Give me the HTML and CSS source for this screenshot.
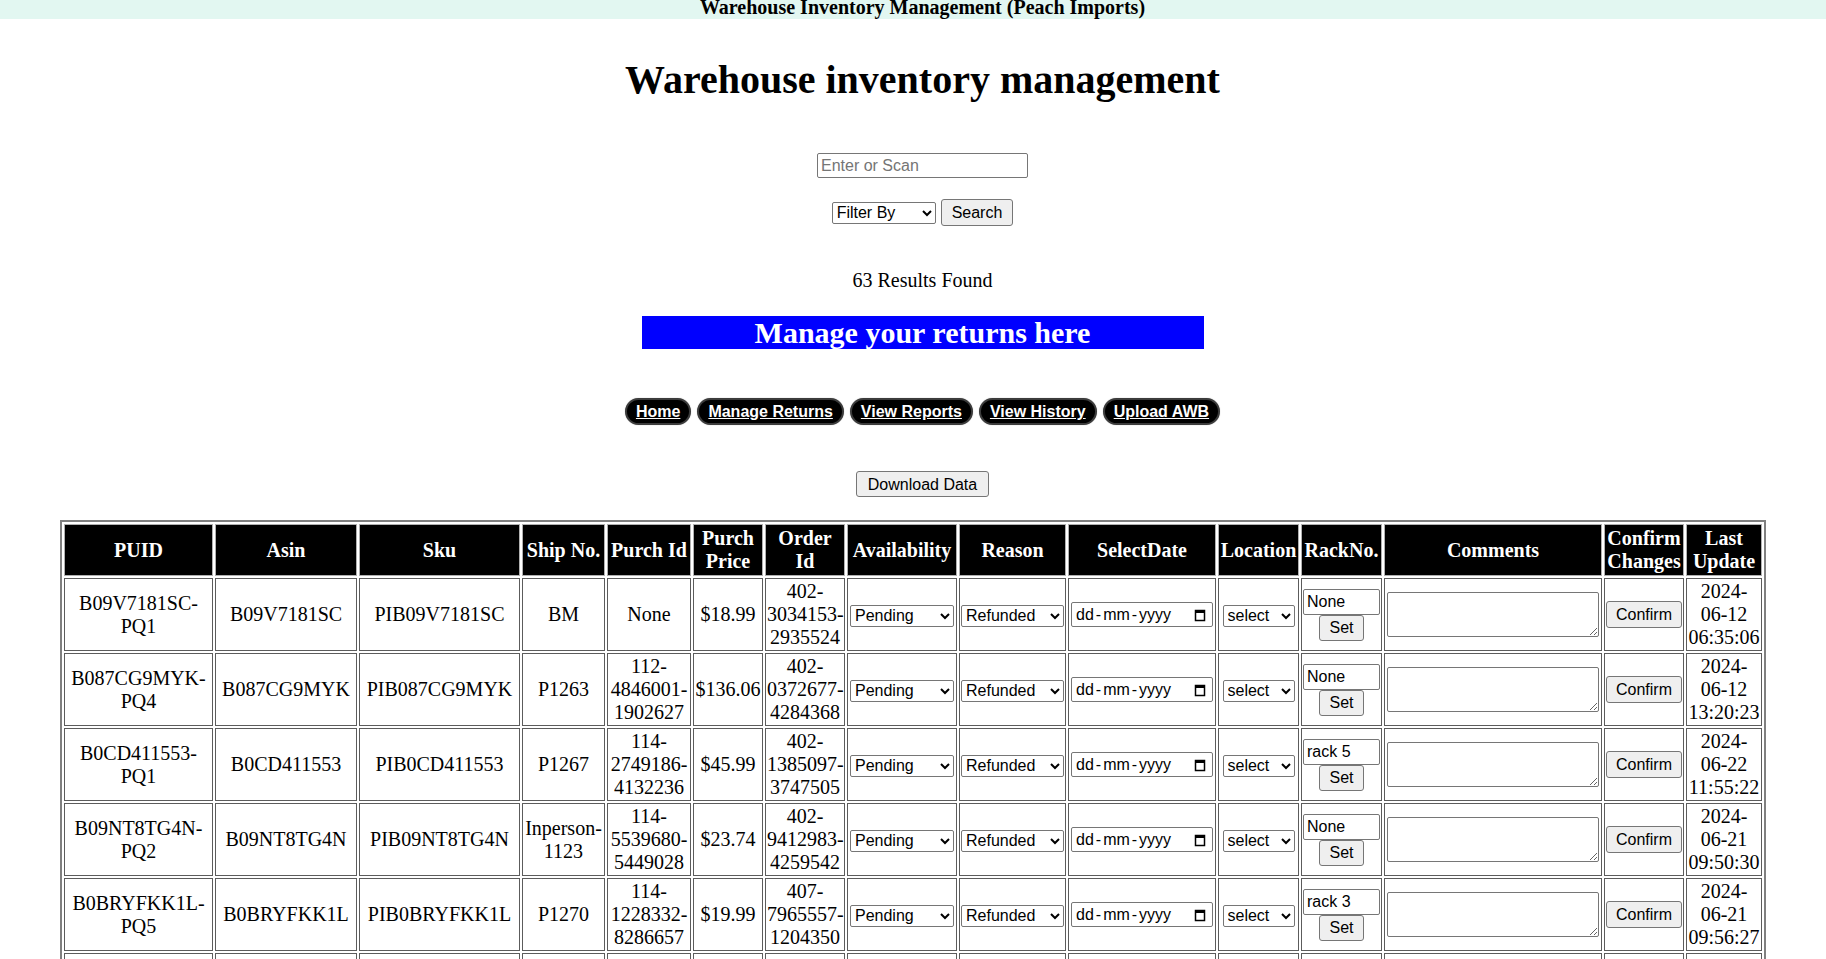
FILE: index.html
```html
<!DOCTYPE html>
<html lang="en">
<head>
<meta charset="utf-8">
<title>Warehouse Inventory Management</title>
<link rel="stylesheet" href="styles.css">
</head>
<body>
<div class="topbar">Warehouse Inventory Management (Peach Imports)</div>
<div class="head">
  <h1 class="title">Warehouse inventory management</h1>
  <input class="scan" type="text" placeholder="Enter or Scan">
  <div class="filter-row">
    <select class="filter"><option>Filter By</option></select>
    <button class="btn search">Search</button>
  </div>
  <p class="results">63 Results Found</p>
  <div class="banner">Manage your returns here</div>
  <nav class="nav">
    <a href="#">Home</a>
    <a href="#">Manage Returns</a>
    <a href="#">View Reports</a>
    <a href="#">View History</a>
    <a href="#">Upload AWB</a>
  </nav>
  <button class="btn download">Download Data</button>
</div>

<table class="inv">
  <thead>
    <tr>
      <th class="c-puid">PUID</th>
      <th class="c-asin">Asin</th>
      <th class="c-sku">Sku</th>
      <th class="c-ship">Ship No.</th>
      <th class="c-pid">Purch Id</th>
      <th class="c-price">Purch Price</th>
      <th class="c-order">Order Id</th>
      <th class="c-avail">Availability</th>
      <th class="c-reason">Reason</th>
      <th class="c-date">SelectDate</th>
      <th class="c-loc">Location</th>
      <th class="c-rack">RackNo.</th>
      <th class="c-comm">Comments</th>
      <th class="c-conf">Confirm Changes</th>
      <th class="c-last">Last Update</th>
    </tr>
  </thead>
  <tbody>
    <tr>
      <td>B09V7181SC-PQ1</td><td>B09V7181SC</td><td>PIB09V7181SC</td><td>BM</td><td>None</td><td>$18.99</td><td>402-3034153-2935524</td>
      <td><select class="sel avail"><option>Pending</option></select></td>
      <td><select class="sel reason"><option>Refunded</option></select></td>
      <td><span class="date"><span class="df">dd</span><span class="ds">-</span><span class="df">mm</span><span class="ds">-</span><span class="df">yyyy</span><svg class="cal" width="12" height="14" viewBox="0 0 12 14"><rect x="1.5" y="2.5" width="9" height="10" fill="none" stroke="#000" stroke-width="1.5"/><rect x="1" y="2" width="10" height="3" fill="#000"/></svg></span></td>
      <td><select class="sel loc"><option>select</option></select></td>
      <td><input class="rack" type="text" value="None"><button class="btn set">Set</button></td>
      <td><textarea class="comm"></textarea></td>
      <td><button class="btn confirm">Confirm</button></td>
      <td>2024-06-12 06:35:06</td>
    </tr>
    <tr>
      <td>B087CG9MYK-PQ4</td><td>B087CG9MYK</td><td>PIB087CG9MYK</td><td>P1263</td><td>112-4846001-1902627</td><td>$136.06</td><td>402-0372677-4284368</td>
      <td><select class="sel avail"><option>Pending</option></select></td>
      <td><select class="sel reason"><option>Refunded</option></select></td>
      <td><span class="date"><span class="df">dd</span><span class="ds">-</span><span class="df">mm</span><span class="ds">-</span><span class="df">yyyy</span><svg class="cal" width="12" height="14" viewBox="0 0 12 14"><rect x="1.5" y="2.5" width="9" height="10" fill="none" stroke="#000" stroke-width="1.5"/><rect x="1" y="2" width="10" height="3" fill="#000"/></svg></span></td>
      <td><select class="sel loc"><option>select</option></select></td>
      <td><input class="rack" type="text" value="None"><button class="btn set">Set</button></td>
      <td><textarea class="comm"></textarea></td>
      <td><button class="btn confirm">Confirm</button></td>
      <td>2024-06-12 13:20:23</td>
    </tr>
    <tr>
      <td>B0CD411553-PQ1</td><td>B0CD411553</td><td>PIB0CD411553</td><td>P1267</td><td>114-2749186-4132236</td><td>$45.99</td><td>402-1385097-3747505</td>
      <td><select class="sel avail"><option>Pending</option></select></td>
      <td><select class="sel reason"><option>Refunded</option></select></td>
      <td><span class="date"><span class="df">dd</span><span class="ds">-</span><span class="df">mm</span><span class="ds">-</span><span class="df">yyyy</span><svg class="cal" width="12" height="14" viewBox="0 0 12 14"><rect x="1.5" y="2.5" width="9" height="10" fill="none" stroke="#000" stroke-width="1.5"/><rect x="1" y="2" width="10" height="3" fill="#000"/></svg></span></td>
      <td><select class="sel loc"><option>select</option></select></td>
      <td><input class="rack" type="text" value="rack 5"><button class="btn set">Set</button></td>
      <td><textarea class="comm"></textarea></td>
      <td><button class="btn confirm">Confirm</button></td>
      <td>2024-06-22 11:55:22</td>
    </tr>
    <tr>
      <td>B09NT8TG4N-PQ2</td><td>B09NT8TG4N</td><td>PIB09NT8TG4N</td><td>Inperson-1123</td><td>114-5539680-5449028</td><td>$23.74</td><td>402-9412983-4259542</td>
      <td><select class="sel avail"><option>Pending</option></select></td>
      <td><select class="sel reason"><option>Refunded</option></select></td>
      <td><span class="date"><span class="df">dd</span><span class="ds">-</span><span class="df">mm</span><span class="ds">-</span><span class="df">yyyy</span><svg class="cal" width="12" height="14" viewBox="0 0 12 14"><rect x="1.5" y="2.5" width="9" height="10" fill="none" stroke="#000" stroke-width="1.5"/><rect x="1" y="2" width="10" height="3" fill="#000"/></svg></span></td>
      <td><select class="sel loc"><option>select</option></select></td>
      <td><input class="rack" type="text" value="None"><button class="btn set">Set</button></td>
      <td><textarea class="comm"></textarea></td>
      <td><button class="btn confirm">Confirm</button></td>
      <td>2024-06-21 09:50:30</td>
    </tr>
    <tr>
      <td>B0BRYFKK1L-PQ5</td><td>B0BRYFKK1L</td><td>PIB0BRYFKK1L</td><td>P1270</td><td>114-1228332-8286657</td><td>$19.99</td><td>407-7965557-1204350</td>
      <td><select class="sel avail"><option>Pending</option></select></td>
      <td><select class="sel reason"><option>Refunded</option></select></td>
      <td><span class="date"><span class="df">dd</span><span class="ds">-</span><span class="df">mm</span><span class="ds">-</span><span class="df">yyyy</span><svg class="cal" width="12" height="14" viewBox="0 0 12 14"><rect x="1.5" y="2.5" width="9" height="10" fill="none" stroke="#000" stroke-width="1.5"/><rect x="1" y="2" width="10" height="3" fill="#000"/></svg></span></td>
      <td><select class="sel loc"><option>select</option></select></td>
      <td><input class="rack" type="text" value="rack 3"><button class="btn set">Set</button></td>
      <td><textarea class="comm"></textarea></td>
      <td><button class="btn confirm">Confirm</button></td>
      <td>2024-06-21 09:56:27</td>
    </tr>
    <tr>
      <td>B0BRYFKK1L-PQ6</td><td>B0BRYFKK1L</td><td>PIB0BRYFKK1L</td><td>P1270</td><td>114-1228332-8286657</td><td>$19.99</td><td>407-7965557-1204350</td>
      <td><select class="sel avail"><option>Pending</option></select></td>
      <td><select class="sel reason"><option>Refunded</option></select></td>
      <td><span class="date"><span class="df">dd</span><span class="ds">-</span><span class="df">mm</span><span class="ds">-</span><span class="df">yyyy</span><svg class="cal" width="12" height="14" viewBox="0 0 12 14"><rect x="1.5" y="2.5" width="9" height="10" fill="none" stroke="#000" stroke-width="1.5"/><rect x="1" y="2" width="10" height="3" fill="#000"/></svg></span></td>
      <td><select class="sel loc"><option>select</option></select></td>
      <td><input class="rack" type="text" value="None"><button class="btn set">Set</button></td>
      <td><textarea class="comm"></textarea></td>
      <td><button class="btn confirm">Confirm</button></td>
      <td>2024-06-21 09:58:10</td>
    </tr>
  </tbody>
</table>
</body>
</html>
```

FILE: styles.css
```css
body {
  margin: 0;
  font-family: "Liberation Serif", "Times New Roman", serif;
  font-size: 20px;
  color: #000;
  background: #fff;
}

.topbar {
  background: #e2f7f1;
  height: 19px;
  line-height: 15px;
  font-weight: bold;
  font-size: 20px;
  text-align: center;
  padding-left: 19px;
}

.head {
  display: flex;
  flex-direction: column;
  align-items: center;
  padding-left: 19px;
}

.title {
  font-size: 40px;
  line-height: 46px;
  margin: 38px 0 0;
  font-weight: bold;
}

.scan {
  margin-top: 50px;
  width: 211px;
  height: 25px;
  box-sizing: border-box;
  font: 16px "Liberation Sans", Arial, sans-serif;
  padding: 1px 3px;
  border: 1px solid #767676;
  border-radius: 2px;
}
.scan::placeholder { color: #757575; }

.filter-row {
  margin-top: 21px;
  display: flex;
  align-items: center;
  gap: 5px;
  height: 27px;
}

.filter, .sel {
  height: 22px;
  box-sizing: border-box;
  font: 16px "Liberation Sans", Arial, sans-serif;
  color: #000;
  background: #fff;
  border: 1px solid #767676;
  border-radius: 2px;
  vertical-align: middle;
}
.filter { width: 104px; }

.btn {
  font: 16px "Liberation Sans", Arial, sans-serif;
  line-height: 19px;
  color: #000;
  background: #efefef;
  border: 1px solid #767676;
  border-radius: 3px;
  padding: 3px 10px;
  box-sizing: border-box;
}
.search { height: 27px; }

.results {
  margin: 43px 0 0;
  line-height: 23px;
}

.banner {
  margin-top: 24px;
  width: 562px;
  height: 33px;
  background: #0000ff;
  color: #fff;
  font-weight: bold;
  font-size: 30px;
  line-height: 33px;
  text-align: center;
}

.nav {
  margin-top: 49px;
  display: flex;
  gap: 6px;
}
.nav a {
  display: block;
  height: 27px;
  box-sizing: border-box;
  padding: 0 9px;
  background: #000;
  color: #fff;
  font: bold 16px "Liberation Sans", Arial, sans-serif;
  line-height: 23px;
  text-decoration: underline;
  border: 2px solid #3c3c3c;
  border-radius: 14px;
  box-shadow: 0 0 1px #999;
}

.download {
  margin-top: 46px;
  height: 26px;
  padding: 2px 11px;
}

.inv {
  width: 1706px;
  table-layout: fixed;
  border: 2px solid #808080;
  border-spacing: 2px;
  margin: 23px auto 0;
}
.inv th {
  background: #000;
  color: #fff;
  font-weight: bold;
  font-size: 20px;
  line-height: 23px;
  border: 1px solid #b0b0b0;
  padding: 2px 1px;
  box-sizing: border-box;
}
.inv td {
  border: 1px solid #5c5c5c;
  padding: 1px;
  text-align: center;
  vertical-align: middle;
  line-height: 23px;
}

.c-puid { width: 149px; }
.c-asin { width: 142px; }
.c-sku { width: 161px; }
.c-ship { width: 83px; }
.c-pid { width: 84px; }
.c-price { width: 70px; }
.c-order { width: 80px; }
.c-avail { width: 110px; }
.c-reason { width: 107px; }
.c-date { width: 148px; }
.c-loc { width: 81px; }
.c-rack { width: 81px; }
.c-comm { width: 218px; }
.c-conf { width: 80px; }
.c-last { width: 76px; }

.avail { width: 104px; }
.reason { width: 103px; }
.loc { width: 72px; }

.date {
  display: inline-flex;
  align-items: center;
  width: 142px;
  height: 25px;
  box-sizing: border-box;
  border: 1px solid #767676;
  border-radius: 2px;
  padding: 0 6px 0 3px;
  font: 16px "Liberation Sans", Arial, sans-serif;
  vertical-align: middle;
  background: #fff;
}
.df { padding: 0 1px; }
.ds { padding: 0 1px; }
.cal { margin-left: auto; }

.rack {
  display: block;
  width: 77px;
  height: 26px;
  box-sizing: border-box;
  margin: 0 auto;
  padding: 1px 3px;
  font: 16px "Liberation Sans", Arial, sans-serif;
  border: 1px solid #767676;
  border-radius: 2px;
}
.set {
  display: block;
  margin: 0 auto;
  height: 26px;
  padding: 2px 9px;
}

.comm {
  display: block;
  margin: 0 auto;
  width: 212px;
  height: 45px;
  box-sizing: border-box;
  border: 1px solid #767676;
  border-radius: 2px;
  font: 16px "Liberation Sans", Arial, sans-serif;
}

.confirm {
  height: 27px;
  padding: 3px 9px;
  vertical-align: middle;
}
```
